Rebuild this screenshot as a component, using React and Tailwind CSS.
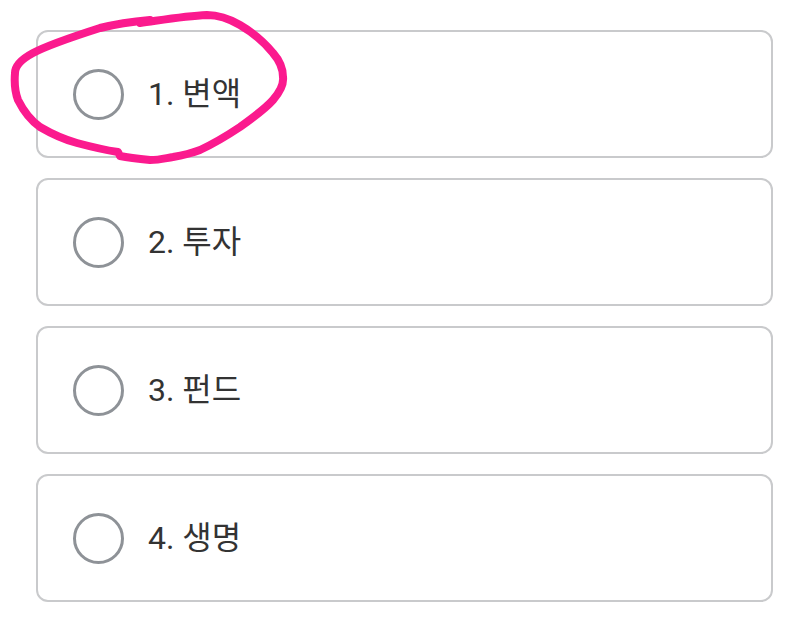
export default function App() {
  const items = ["1. 변액", "2. 투자", "3. 펀드", "4. 생명"];
  return (
    <div className="relative w-[793px] h-[620px] bg-white overflow-hidden" style={{ fontFamily: "Roboto, 'Noto Sans CJK KR', sans-serif" }}>
      <div className="flex flex-col gap-[20px] pt-[30px] pl-[36px] w-[773px]">
        {items.map((t) => (
          <div key={t} className="h-[128px] border-2 border-[#c9cacc] rounded-[12px] flex items-center pl-[35px] gap-[24px]">
            <div className="w-[51px] h-[51px] rounded-full border-[3px] border-[#8e9297] shrink-0" />
            <span className="text-[32px] leading-none text-[#333333]">{t}</span>
          </div>
        ))}
      </div>
      <svg className="absolute left-0 top-0 pointer-events-none" width="793" height="620" viewBox="0 0 793 620">
        <path
          d="M150 20 C128 22 112 25 100 28 C75 36 50 44 33 53 C20 60 15 66 15 73 C14 85 15 92 18 100 C24 112 30 120 40 127 C52 134 62 139 77 143 C92 147 105 150 118 152 L120 156 C130 158 140 159 150 160 C160 160 166 158 173 157 C185 155 192 153 200 150 C215 143 228 135 240 127 C254 117 266 108 273 100 C280 92 284 85 283 77 C283 68 280 61 273 53 C264 42 252 32 240 25 C228 18 218 15 207 15 C185 16 162 20 140 23"
          fill="none"
          stroke="#fb1a8e"
          strokeWidth="8"
          strokeLinecap="round"
          strokeLinejoin="round"
        />
      </svg>
    </div>
  );
}
